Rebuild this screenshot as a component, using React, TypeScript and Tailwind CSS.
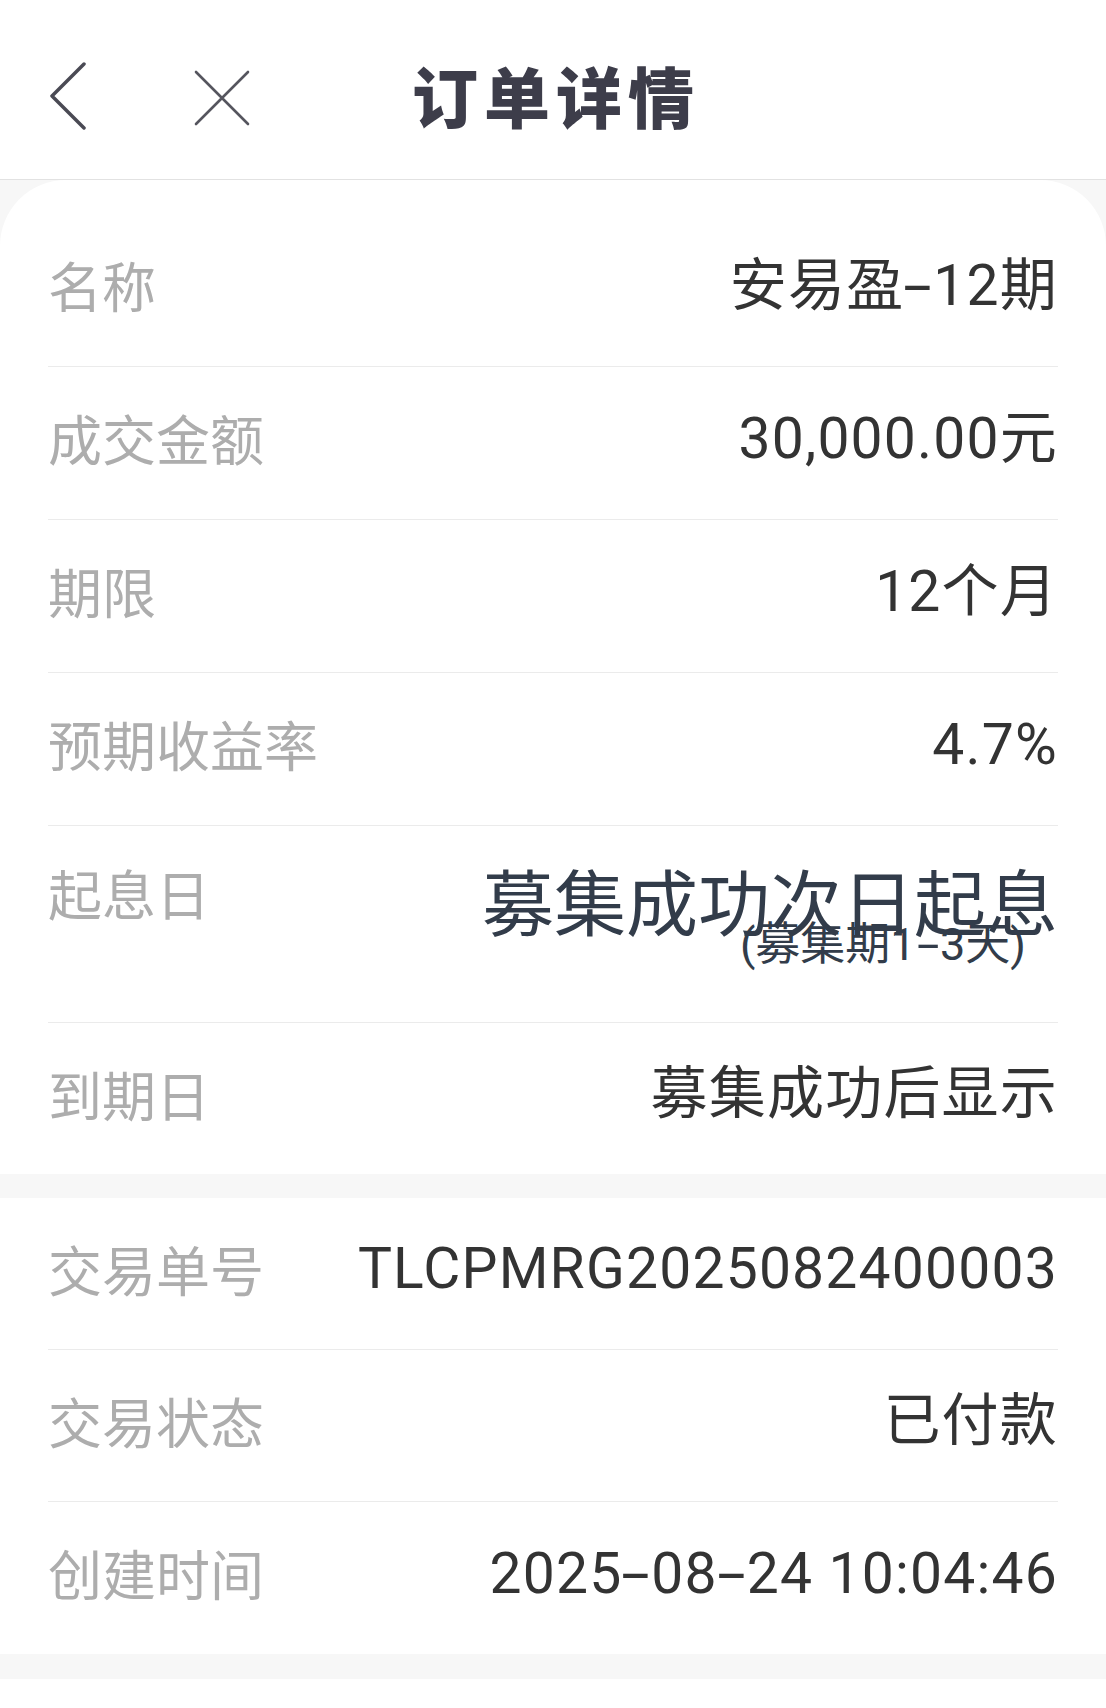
const font = { fontFamily: '"Noto Sans CJK SC", "Noto Sans", sans-serif' };
const valueFont = { fontFamily: 'Roboto, "Noto Sans CJK SC", sans-serif' };

type Row = { label: string; value: string };

const top: Row[] = [
  { label: '名称', value: '安易盈-12期' },
  { label: '成交金额', value: '30,000.00元' },
  { label: '期限', value: '12个月' },
  { label: '预期收益率', value: '4.7%' },
];

const bottom: Row[] = [
  { label: '交易单号', value: 'TLCPMRG2025082400003' },
  { label: '交易状态', value: '已付款' },
  { label: '创建时间', value: '2025-08-24 10:04:46' },
];

// 原字体的连字符更宽，这里给 "-" 两侧补点间距并横向拉宽
function dashed(s: string) {
  return s.split('-').flatMap((part, i) =>
    i === 0 ? [part] : [<span key={i} className="mx-[6px] inline-block scale-x-[1.8]">-</span>, part],
  );
}

function Line({ label, value, h, last }: Row & { h: string; last?: boolean }) {
  return (
    <div className={`flex items-center justify-between pb-[10px] ${h} ${last ? '' : 'border-b border-[#ebebeb]'}`}>
      <span className="text-[54px] leading-none text-[#adadad]">{label}</span>
      <span className="text-[57px] leading-none tracking-[1.2px] text-[#333333]" style={valueFont}>
        {dashed(value)}
      </span>
    </div>
  );
}

export default function App() {
  return (
    <div className="w-[1106px] min-h-[1708px] bg-white" style={font}>
      {/* 顶部导航 */}
      <div className="grid h-[180px] grid-cols-[1fr_auto_1fr] items-center border-b border-[#e2e2e2] bg-white">
        <div className="flex items-center pl-[49px] pt-[12px]">
          <svg width="38" height="68" viewBox="0 0 38 68" fill="none">
            <path d="M35 2 L3 34 L35 66" stroke="#4a4a54" strokeWidth="3.5" strokeLinecap="round" strokeLinejoin="round" />
          </svg>
          <svg className="ml-[107px] mt-[4px]" width="56" height="56" viewBox="0 0 56 56" fill="none">
            <path d="M2 2 L54 54 M54 2 L2 54" stroke="#55555e" strokeWidth="2.6" strokeLinecap="round" />
          </svg>
        </div>
        <div className="pl-[6px] pt-[8px] text-[66px] font-black leading-none tracking-[6px] text-[#3d3d4a]">订单详情</div>
        <div />
      </div>

      <div className="bg-[#f7f7f7]">
        {/* 产品信息 */}
        <div className="rounded-t-[66px] bg-white px-[48px] pt-[34px]">
          {top.map((r) => (
            <Line key={r.label} {...r} h="h-[153px]" />
          ))}
          <div className="flex h-[197px] items-start justify-between border-b border-[#ebebeb] pt-[44px]">
            <span className="-mt-[4px] text-[54px] leading-none text-[#adadad]">起息日</span>
            <div className="flex flex-col items-end" style={valueFont}>
              <span className="text-[72px] leading-none text-[#323c4a]">募集成功次日起息</span>
              <span className="-mt-[20px] mr-[32px] text-[45px] leading-none text-[#323c4a]">{dashed('(募集期1-3天)')}</span>
            </div>
          </div>
          <Line label="到期日" value="募集成功后显示" h="h-[151px]" last />
        </div>

        {/* 交易信息 */}
        <div className="mt-[24px] bg-white px-[48px]">
          {bottom.map((r, i) => (
            <Line key={r.label} {...r} h="h-[152px]" last={i === bottom.length - 1} />
          ))}
        </div>

        <div className="mt-[25px] h-[30px] bg-white" />
      </div>
    </div>
  );
}
